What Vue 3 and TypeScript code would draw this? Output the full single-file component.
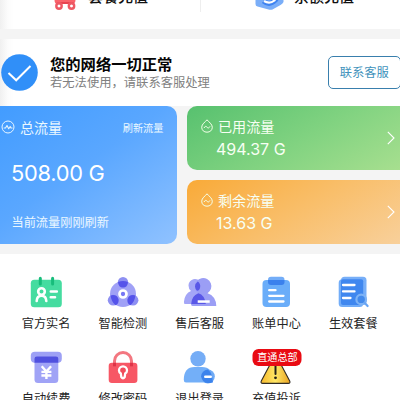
<script setup lang="ts">
interface UsageCard {
  name: string
  title: string
  value: string
}
interface Service {
  icon: string
  label: string
  badge?: string
}

const usage: UsageCard[] = [
  { name: 'used', title: '已用流量', value: '494.37 G' },
  { name: 'left', title: '剩余流量', value: '13.63 G' },
]

const services: Service[] = [
  { icon: 'identity', label: '官方实名' },
  { icon: 'detect', label: '智能检测' },
  { icon: 'support', label: '售后客服' },
  { icon: 'bill', label: '账单中心' },
  { icon: 'plan', label: '生效套餐' },
  { icon: 'renew', label: '自动续费' },
  { icon: 'lock', label: '修改密码' },
  { icon: 'logout', label: '退出登录' },
  { icon: 'warn', label: '充值投诉', badge: '直通总部' },
]
</script>

<template>
  <div class="page">
    <header class="recharge">
      <div class="entry">
        <svg class="cart" viewBox="0 0 24 24">
          <path d="M1 0H22V14Q22 18 18 18H4Q1 18 1 14Z" fill="#f9636b" />
          <path d="M4 17H20" stroke="#e8434f" stroke-width="2" />
          <circle cx="5.5" cy="20" r="2.7" fill="#fff" stroke="#ee5964" stroke-width="2.4" />
          <circle cx="18" cy="20" r="2.7" fill="#fff" stroke="#ee5964" stroke-width="2.4" />
        </svg>
        <span>套餐充值</span>
      </div>
      <div class="entry second">
        <svg class="coin" viewBox="0 0 30 30">
          <path d="M1 6L15 0L29 6V22Q28 24 26 25L18 29.5Q16 30 14 29.5L3 26.5Q1 26 1 24Z" fill="#7aaef8" />
          <path d="M9 21Q15 26 21 20Q24 16 16 14" fill="none" stroke="#3e83f0" stroke-width="5" />
          <path d="M9.5 21Q15 24.5 20 20.5Q22 17 14 15" fill="none" stroke="#fff" stroke-width="2.2" />
        </svg>
        <span>余额充值</span>
      </div>
    </header>

    <section class="status">
      <svg class="check" viewBox="0 0 37 37">
        <circle cx="18.5" cy="18.5" r="18.3" fill="#308ff8" />
        <path d="M7.5 19L15.2 26.3L29.5 12" fill="none" stroke="#fff" stroke-width="2" />
      </svg>
      <div class="message">
        <h1>您的网络一切正常</h1>
        <p>若无法使用，请联系客服处理</p>
      </div>
      <button class="contact">联系客服</button>
    </section>

    <section class="cards">
      <article class="total">
        <div class="total-head">
          <svg viewBox="0 0 14 14" fill="none" stroke="#e8f6ff">
            <circle cx="7" cy="7" r="6" stroke-width="1" />
            <path d="M2.7 8H4.5L6 5.5L7.7 8.8L9.2 6.5L10 8H11.5" stroke-width="1.1" stroke-linejoin="round" />
          </svg>
          <span class="title">总流量</span>
          <span class="refresh">刷新流量</span>
        </div>
        <div class="amount">508.00 G</div>
        <div class="time">当前流量刚刚刷新</div>
      </article>
      <div class="side">
        <article v-for="card in usage" :key="card.name" class="usage" :class="card.name">
          <div>
            <div class="usage-head">
              <svg viewBox="0 0 12 14" fill="none" stroke="#f4ffe9">
                <path d="M6 .8C4.2 3 .7 5.2 .7 8.2C.7 11.3 3 13.2 6 13.2S11.3 11.3 11.3 8.2C11.3 5.2 7.8 3 6 .8Z" stroke-width="1" />
                <path d="M3 9C4 7 5 7 6 8.2S8 9.2 9 7.4" stroke-width="1" />
              </svg>
              <span>{{ card.title }}</span>
            </div>
            <div class="usage-value">{{ card.value }}</div>
          </div>
          <svg class="arrow" viewBox="0 0 8 14"><path d="M.8 .8L7 7L.8 13.2" fill="none" stroke="#fff" stroke-width="1.1" /></svg>
        </article>
      </div>
    </section>

    <section class="services">
      <div v-for="item in services" :key="item.label" class="service">
        <svg v-if="item.icon === 'identity'" viewBox="0 0 34 34">
          <rect x="1.8" y="4.8" width="31" height="27.4" rx="3.5" fill="#45dca0" />
          <path d="M11.3 3.3V9M23.6 3.3V9" stroke="#17bd7b" stroke-width="3" stroke-linecap="round" />
          <g fill="none" stroke="#fff" stroke-width="2.6" stroke-linecap="round">
            <circle cx="12.5" cy="16.5" r="3.3" /><path d="M7.7 26Q8 20.8 12.5 20.8T17.3 26M21.8 16.5H27.8M21.8 22.2H26" />
          </g>
        </svg>
        <svg v-else-if="item.icon === 'detect'" viewBox="0 0 34 34">
          <circle cx="17" cy="19" r="13" fill="#a0a1f6" />
          <circle cx="17" cy="7.3" r="5.2" fill="#8e90f2" /><circle cx="7.2" cy="25.2" r="5.4" fill="#8e90f2" /><circle cx="27" cy="25.2" r="5.4" fill="#8e90f2" />
          <path d="M12 7Q17 5 22 7Q21.5 12.5 17 12.5T12 7ZM4.6 20.4Q11 19 12.6 24.5Q12.8 29 9.5 30.2Q5 26 4.6 20.4ZM29.4 20.4Q23 19 21.4 24.5Q21.2 29 24.5 30.2Q29 26 29.4 20.4Z" fill="#5553ea" />
          <circle cx="17" cy="19" r="3.5" fill="#7777f4" stroke="#fff" stroke-width="2.7" />
        </svg>
        <svg v-else-if="item.icon === 'support'" viewBox="0 0 34 34">
          <path d="M5.5 10.5A6.5 6.5 0 1 1 15.5 16Q22 19 23 29H2Q.8 29 1 26.5Q1.8 18.5 8 16Q5.5 14 5.5 10.5Z" fill="#a4a6f7" />
          <path d="M12 11.5A8.2 8.2 0 1 1 24.5 18.2Q33 21 33.3 31H9.5Q8 31 8 29Q8.5 21 15.5 18.2Q12 16 12 11.5Z" fill="#9b9ef5" />
          <path d="M14.8 6.5Q17.6 8.5 17.2 12T14 15.7Q12 13.5 12 11.5Q12 8.5 14.8 6.5ZM15.3 18.2Q21.8 20 22.8 29H8.2Q8.6 20.8 15.3 18.2Z" fill="#5957e7" />
          <rect x="14.7" y="25.3" width="12" height="2.5" fill="#fff" />
        </svg>
        <svg v-else-if="item.icon === 'bill'" viewBox="0 0 34 34">
          <rect x="3.5" y="5" width="27.5" height="27" rx="4" fill="#6aadf9" />
          <path d="M9 5H25.5V7Q25.5 10 22.5 10H12Q9 10 9 7Z" fill="#3b81ed" /><path d="M9 5Q9 1.8 12 1.8H22.5Q25.5 1.8 25.5 5Z" fill="#73adf8" />
          <path d="M10.2 15.2H16.5M10.2 20.8H24.5M10.2 26.5H24.5" stroke="#fff" stroke-width="2.3" stroke-linecap="round" />
        </svg>
        <svg v-else-if="item.icon === 'plan'" viewBox="0 0 34 34">
          <rect x="2.7" y="4.3" width="24.5" height="27.8" rx="3.5" fill="#72adf8" /><rect x="5" y="1.7" width="25.5" height="28.3" rx="3.5" fill="#78aff8" />
          <rect x="5" y="4.3" width="22.2" height="25.7" rx="2" fill="#3f87ef" />
          <path d="M7 10H18.5M7 16.4H18.5M7 23H14.5" stroke="#fff" stroke-width="2.3" stroke-linecap="round" />
          <circle cx="25.2" cy="24.4" r="4.8" fill="#438aec" stroke="#7eb3f5" stroke-width="2.2" /><path d="M28.8 28L31.6 31" stroke="#69a5f3" stroke-width="2.2" stroke-linecap="round" />
        </svg>
        <svg v-else-if="item.icon === 'renew'" viewBox="0 0 34 34">
          <rect x="1.8" y="1.8" width="31" height="11" rx="4" fill="#9da0f5" /><path d="M5.5 8.5Q5.5 6.5 7.5 6.5H27.3Q29.3 6.5 29.3 8.5V29.5Q29.3 33 25.8 33H9Q5.5 33 5.5 29.5Z" fill="#a0a3f6" />
          <path d="M5.5 12.8V8.8Q5.5 6.5 7.8 6.5H27Q29.3 6.5 29.3 8.8V12.8Z" fill="#5050df" />
          <path d="M12.7 16.3L17.4 21.5L22.1 16.3M17.4 21.5V29M12.4 21.9H22.4M12.4 25.5H22.4" fill="none" stroke="#fff" stroke-width="2.4" />
        </svg>
        <svg v-else-if="item.icon === 'lock'" viewBox="0 0 34 34">
          <rect x="2.7" y="12.7" width="28.7" height="20.2" rx="3.2" fill="#f75765" />
          <path d="M8.5 16.5V11A8.5 8.5 0 0 1 25.5 11V16.5" fill="none" stroke="#f37780" stroke-width="3" /><path d="M8.5 12.7V16.5M25.5 12.7V16.5" stroke="#df3447" stroke-width="3" />
          <path d="M15.3 27L14.8 23.5Q13 22.3 13 20.4A4 4 0 0 1 21 20.4Q21 22.3 19.2 23.5L18.7 27Q17 29.5 15.3 27Z" fill="#f04d5c" stroke="#fff" stroke-width="2.3" />
        </svg>
        <svg v-else-if="item.icon === 'logout'" viewBox="0 0 34 34">
          <circle cx="15" cy="8.7" r="7.7" fill="#75adf6" /><path d="M.8 29.5Q1 17 11.5 17H19Q29.5 17 29.8 29.5V32.5H3Q.8 32.5 .8 30Z" fill="#73aff8" />
          <circle cx="24.9" cy="26.5" r="6.9" fill="#6faaf5" /><path d="M24.8 19.6Q29.5 23 29.8 32.2Q20 35.5 18.1 26.5Q18.8 20.5 24.8 19.6Z" fill="#3c83ec" />
          <path d="M22.3 26.7H27.7" stroke="#fff" stroke-width="2.6" stroke-linecap="round" />
        </svg>
        <svg v-else viewBox="0 0 34 34">
          <defs><linearGradient id="gold" x2="1"><stop stop-color="#f6b92c" /><stop offset=".5" stop-color="#ffe766" /><stop offset="1" stop-color="#e9a321" /></linearGradient></defs>
          <path d="M15 7Q16.5 4 18 7L30.7 31Q31.7 33.4 29.2 33.4H3.8Q1.3 33.4 2.3 31Z" fill="url(#gold)" stroke="#302b24" stroke-width="1.1" />
          <path d="M16.5 14V24" stroke="#252217" stroke-width="2" stroke-linecap="round" /><circle cx="16.5" cy="27.8" r="1.4" fill="#252217" />
        </svg>
        <span class="label">{{ item.label }}</span>
        <span v-if="item.badge" class="badge">{{ item.badge }}</span>
      </div>
    </section>
  </div>
</template>

<style>
body {
  margin: 0;
  background: #fff;
}
</style>

<style scoped>
.page {
  width: 400px;
  height: 400px;
  overflow: hidden;
  background: #fff;
  color: #222;
  font-family: Inter, "Noto Sans CJK SC", sans-serif;
}
.recharge {
  height: 29px;
  display: flex;
  overflow: hidden;
  background: linear-gradient(90deg, #f0f0f0, #fcfcfc 8px, #fff 14px);
}
.entry {
  display: flex;
  align-items: flex-end;
  width: 201px;
  height: 12px;
  box-sizing: border-box;
  padding-left: 53px;
  border-right: 1px solid #eee;
  font-size: 15px;
  font-weight: 500;
  line-height: 22px;
  color: #111;
}
.entry span { margin-bottom: 4.5px; }
.entry.second { width: 199px; padding-left: 53px; border: 0; }
.cart { width: 25px; height: 24px; margin: 0 10px 2px 0; flex: none; }
.coin { width: 31px; height: 30px; margin: 0 9px 2px 0; flex: none; }
.status {
  display: flex;
  height: 67px;
  margin-top: 10px;
  box-sizing: border-box;
  padding: 15px 0 0 1px;
  background: linear-gradient(90deg, #f0f0f0, #fcfcfc 8px, #fff 14px);
  box-shadow: 0 -10px #f4f4f4;
}
.check { width: 37px; height: 37px; flex: none; }
.message { margin-left: 12px; width: 278px; flex: none; }
h1 { margin: 1px 0 0; font-size: 15.3px; line-height: 20px; font-weight: 700; color: #050505; }
p { margin: -1px 0 0; font-size: 12.3px; line-height: 18px; color: #808080; white-space: nowrap; }
.contact {
  width: 72.5px;
  height: 33px;
  margin-top: 2px;
  padding: 0 0 2px;
  flex: none;
  border: 1px solid #397fad;
  border-radius: 5px;
  background: #fff;
  color: #4293bc;
  font: 12.3px Inter, "Noto Sans CJK SC", sans-serif;
}
.cards { display: flex; height: 148px; gap: 10.5px; background: #f4f4f4; }
.total {
  width: 176.5px;
  height: 138px;
  box-sizing: border-box;
  border-radius: 0 10px 10px 0;
  padding: 11px 13px 0 1px;
  background: linear-gradient(145deg, #429cff, #5aa7ff 45%, #90c2ff);
  color: #ebf8ff;
}
.total-head { display: flex; align-items: center; height: 21px; }
.total-head svg { width: 14px; height: 14px; margin-top: -1px; }
.title { margin: -2px 0 0 5px; font-size: 14px; }
.refresh { margin: -1px 0 0 auto; font-size: 10.2px; }
.amount { margin: 20px 0 0 10px; font-size: 21.8px; line-height: 30px; font-weight: 400; letter-spacing: -.25px; color: #fff; }
.time { margin: 26px 0 0 10.5px; font-size: 12.2px; line-height: 18px; }
.side { display: flex; flex-direction: column; gap: 10px; width: 213px; }
.usage {
  display: flex;
  justify-content: space-between;
  align-items: center;
  height: 64px;
  box-sizing: border-box;
  padding: 0 5px 0 13.5px;
  border-radius: 10px 0 0 10px;
  color: #f7fff3;
}
.used { background: linear-gradient(150deg, #57c16f, #82d381 55%, #a7df8f); }
.left { background: linear-gradient(150deg, #f9aa38, #f9be69 50%, #f8d09b); }
.usage-head { display: flex; align-items: center; height: 20px; font-size: 14.1px; }
.usage-head svg { width: 12px; height: 14px; margin-right: 5.5px; }
.usage-head span { margin-top: -1px; }
.usage-value { margin: 3px 0 0 15.5px; font-size: 16px; line-height: 21px; font-weight: 400; }
.arrow { width: 8px; height: 14px; margin-top: -1px; }
.services {
  display: grid;
  grid-template-columns: repeat(5, 76.8px);
  grid-auto-rows: 75px;
  padding: 21px 0 0 7.7px;
}
.service { position: relative; display: flex; flex-direction: column; align-items: center; }
.service svg { width: 34px; height: 34px; }
.label { margin-top: 6px; font-size: 12.2px; line-height: 18px; color: #242424; white-space: nowrap; }
.badge {
  position: absolute;
  top: -1px;
  left: calc(50% + 1px);
  width: 49px;
  transform: translateX(-50%);
  border-radius: 6px;
  background: #e90b13;
  color: #fff;
  font-size: 10.1px;
  line-height: 17px;
  text-align: center;
}
</style>
